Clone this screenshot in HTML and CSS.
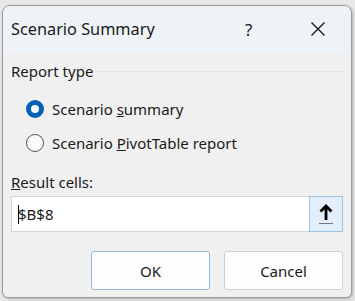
FILE: index.html
```html
<!DOCTYPE html>
<html>
<head>
    <title>Scenario Summary</title>
    <link rel="stylesheet" href="styles.css">
</head>
<body>
    <div class="window">
        <div class="titlebar">
            <span class="title">Scenario Summary</span>
            <span class="help">?</span>
            <span class="close">
                <svg width="16" height="16" viewBox="0 0 16 16">
                    <path d="M1.5 1.5 L14.5 14.5 M14.5 1.5 L1.5 14.5" stroke="#1a1a1a" stroke-width="1.4" fill="none"/>
                </svg>
            </span>
        </div>
        <div class="content">
            <div class="group">
                <div class="group-label"><span>Report type</span></div>
                <label class="radio">
                    <span class="dot checked"></span>
                    <span>Scenario <u>s</u>ummary</span>
                </label>
                <label class="radio">
                    <span class="dot"></span>
                    <span>Scenario <u>P</u>ivotTable report</span>
                </label>
            </div>
            <div class="field-label"><u>R</u>esult cells:</div>
            <div class="field">
                <div class="input"><span class="caret"></span>$B$8</div>
                <div class="pick">
                    <svg width="16" height="22" viewBox="0 0 16 22">
                        <path d="M8 3 L8 17 M2.5 8.5 L8 3 L13.5 8.5" stroke="#000" stroke-width="2.8" fill="none"/>
                        <path d="M1 20.5 H15" stroke="#777" stroke-width="1.2"/>
                    </svg>
                </div>
            </div>
            <div class="buttons">
                <button class="default">OK</button>
                <button>Cancel</button>
            </div>
        </div>
    </div>
</body>
</html>
```

FILE: styles.css
```css
body {
    margin: 0;
    background: #e8e8e8;
    font-family: "Noto Sans", "Open Sans", sans-serif;
    color: #1a1a1a;
}
.window {
    margin: 5px 3px 3px 2px;
    height: 293px;
    background: #f0f0f0;
    border: 1px solid #9a9a9a;
    border-radius: 8px 8px 6px 6px;
    box-shadow: 1px 1px 3px rgba(0, 0, 0, 0.25);
    overflow: hidden;
    box-sizing: border-box;
}
.titlebar {
    height: 46px;
    background: #eef3f8;
    display: flex;
    align-items: center;
    padding-left: 8px;
}
.title {
    font-size: 16.3px;
    flex: 1;
}
.help {
    font-size: 17px;
    width: 65px;
}
.close {
    width: 41px;
    display: flex;
}
.content {
    padding: 8px 8px 0 8px;
}
.group-label {
    display: flex;
    align-items: center;
    font-size: 15px;
    height: 22px;
}
.group-label::after {
    content: "";
    flex: 1;
    border-top: 1px solid #e2e2e2;
    margin-left: 4px;
}
.radio {
    display: flex;
    align-items: center;
    gap: 8px;
    font-size: 15px;
    padding-left: 15px;
    height: 34px;
}
.radio:first-of-type {
    margin-top: 10px;
}
.dot {
    width: 18px;
    height: 18px;
    border: 1px solid #555;
    border-radius: 50%;
    background: #fbfbfb;
    box-sizing: border-box;
}
.dot.checked {
    border: 5px solid #0063b8;
    background: #fff;
}
.field-label {
    font-size: 15px;
    margin-top: 12px;
    height: 24px;
}
.field {
    display: flex;
    height: 36px;
}
.input {
    flex: 1;
    background: #fff;
    border: 1px solid #d6d6d6;
    border-right: none;
    display: flex;
    align-items: center;
    font-size: 15px;
    padding-left: 6px;
}
.caret {
    width: 1px;
    height: 19px;
    background: #000;
    margin-right: -1px;
}
.pick {
    width: 32px;
    background: #e2eefa;
    border: 1px solid #9ec3e6;
    display: flex;
    align-items: center;
    justify-content: center;
}
.buttons {
    display: flex;
    justify-content: flex-end;
    gap: 14px;
    margin-top: 19px;
}
button {
    width: 119px;
    height: 39px;
    background: #fdfdfd;
    border: 1px solid #d0d0d0;
    border-radius: 3px;
    font-family: "Noto Sans", "Open Sans", sans-serif;
    font-size: 15px;
    color: #1a1a1a;
}
button.default {
    border-color: #8fb8e0;
}
```
